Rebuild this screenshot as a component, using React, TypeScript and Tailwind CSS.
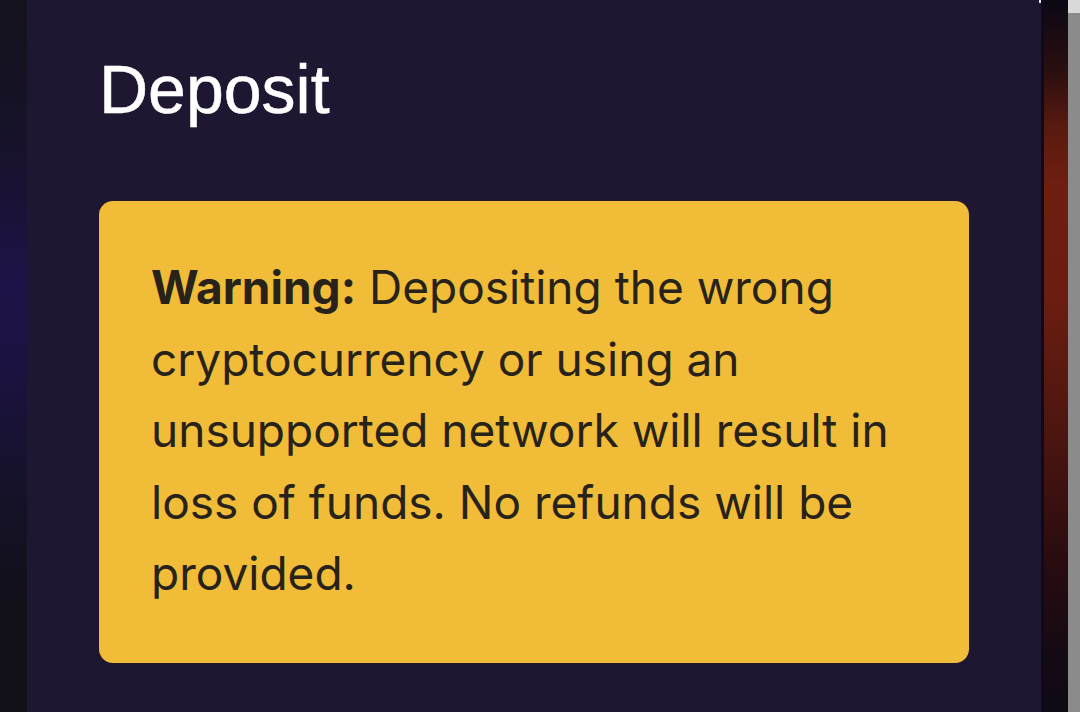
import React from "react";

export default function App() {
  return (
    <div className="w-[1080px] h-[712px] flex overflow-hidden bg-[#121019]">
      <div className="w-[27px] h-full bg-[linear-gradient(180deg,#14121c_0%,#17122a_20%,#1f1248_40%,#1c1240_52%,#15122a_68%,#121019_85%,#121019_100%)]" />
      <div className="w-[1014px] h-full bg-[#1f1632] pl-[72px] pr-[72px] flex flex-col relative">
        <div className="absolute right-0 top-0 w-[2px] h-[3px] bg-[#e8e4f0]" />
        <h1
          className="pt-[55px] text-[68px] leading-[68px] text-white font-normal [-webkit-text-stroke:0.5px_white]"
          style={{ fontFamily: '"Liberation Sans", Arial, sans-serif' }}
        >
          Deposit
        </h1>
        <div
          className="mt-[78px] bg-[#f1bc37] rounded-[14px] pl-[52px] pr-[36px] pt-[51px] pb-[53px] text-[#28231a] text-[46px] leading-[71.5px]"
          style={{ fontFamily: 'Inter, "Noto Sans", sans-serif' }}
        >
          <span className="font-bold">Warning:</span> Depositing the wrong cryptocurrency or using an unsupported network will result in loss of funds. No refunds will be provided.
        </div>
      </div>
      <div className="w-[3px] h-full bg-[#0f0a18]" />
      <div className="w-[24px] h-full bg-[linear-gradient(180deg,#0b0814_0%,#2a0f10_10%,#5a1a10_18%,#6e1f10_26%,#6a1d10_42%,#4a1510_62%,#2a0c10_78%,#140a14_92%,#0f0a14_100%)]" />
      <div className="w-[12px] h-full bg-[#8b8b8b] flex flex-col">
        <div className="h-[13px] bg-[#d9d9d9]" />
        <div className="flex-1 bg-[#8b8b8b] rounded-t-[6px]" />
      </div>
    </div>
  );
}
